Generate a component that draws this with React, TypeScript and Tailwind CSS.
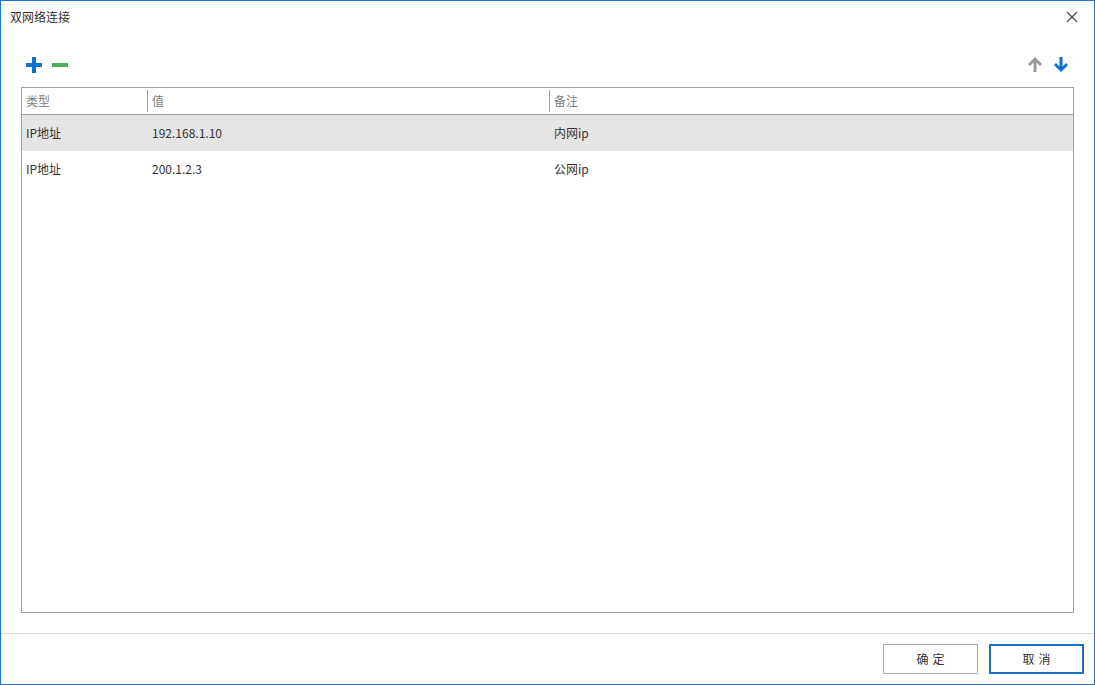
import React from "react";

const font = { fontFamily: '"Microsoft YaHei", "Noto Sans CJK SC", "Noto Sans", sans-serif' };

function Row({ a, b, c, sel }: { a: string; b: string; c: string; sel?: boolean }) {
  return (
    <div className={`flex h-[36px] items-center text-[12px] text-[#333333] ${sel ? "bg-[#e5e5e5]" : "bg-white"}`}>
      <div className="w-[126px] pl-[4px]">{a}</div>
      <div className="w-[402px] pl-[4px]">{b}</div>
      <div className="flex-1 pl-[4px]">{c}</div>
    </div>
  );
}

export default function App() {
  return (
    <div className="w-[1095px] h-[685px] bg-white border border-[#1a76d2] flex flex-col" style={font}>
      <div className="h-[31px] flex items-center justify-between pl-[9px] pr-[16px]">
        <span className="text-[12px] text-[#333333] leading-none">双网络连接</span>
        <svg width="12" height="12" viewBox="0 0 12 12" className="mt-[1px]">
          <path d="M1 1 L11 11 M11 1 L1 11" stroke="#444" strokeWidth="1.1" fill="none" />
        </svg>
      </div>
      <div className="h-[55px] flex items-center justify-between pl-[25px] pr-[25px] pt-[10px]">
        <div className="flex items-center gap-[10px]">
          <svg width="16" height="16" viewBox="0 0 16 16">
            <rect x="6" y="0" width="4" height="16" fill="#0b72d2" />
            <rect x="0" y="6" width="16" height="4" fill="#0b72d2" />
          </svg>
          <svg width="16" height="16" viewBox="0 0 16 16">
            <rect x="0" y="6" width="16" height="4" fill="#4caf50" />
          </svg>
        </div>
        <div className="flex items-center gap-[10px]">
          <svg width="16" height="17" viewBox="0 0 16 17">
            <path d="M8 1 L15 8 L13 10 L9.5 6.5 L9.5 16 L6.5 16 L6.5 6.5 L3 10 L1 8 Z" fill="#999999" />
          </svg>
          <svg width="16" height="17" viewBox="0 0 16 17">
            <path d="M8 16 L15 9 L13 7 L9.5 10.5 L9.5 1 L6.5 1 L6.5 10.5 L3 7 L1 9 Z" fill="#0b72d2" />
          </svg>
        </div>
      </div>
      <div className="ml-[20px] mr-[20px] h-[526px] border border-[#a0a0a0] flex flex-col">
        <div className="h-[27px] flex items-center border-b border-[#a0a0a0] text-[12px] text-[#808080]">
          <div className="w-[126px] pl-[4px] h-[22px] flex items-center border-r border-[#a0a0a0]">类型</div>
          <div className="w-[402px] pl-[4px] h-[22px] flex items-center border-r border-[#a0a0a0]">值</div>
          <div className="flex-1 pl-[4px]">备注</div>
        </div>
        <Row a="IP地址" b="192.168.1.10" c="内网ip" sel />
        <Row a="IP地址" b="200.1.2.3" c="公网ip" />
      </div>
      <div className="mt-[20px] border-t border-[#dcdcdc] flex-1 flex items-center justify-end gap-[11px] pr-[10px]">
        <button className="w-[95px] h-[30px] border border-[#adadad] bg-white text-[12px] text-[#333333] tracking-[4px] pl-[4px]" style={font}>确定</button>
        <button className="w-[95px] h-[30px] border-2 border-[#1a6fc4] bg-white text-[12px] text-[#333333] tracking-[4px] pl-[4px]" style={font}>取消</button>
      </div>
    </div>
  );
}
